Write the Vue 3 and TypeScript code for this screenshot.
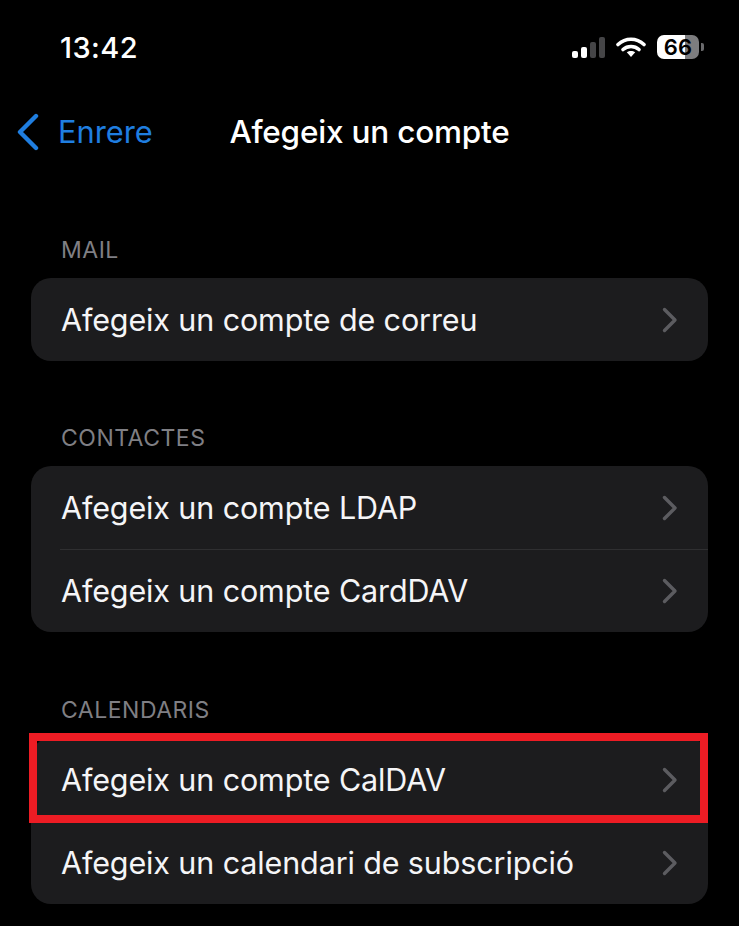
<template>
  <div class="screen">
    <div class="status">
      <span class="time">13:42</span>
      <div class="status-icons">
        <div class="signal">
          <i v-for="(h, n) in bars" :key="n" :class="{ on: n < 2 }" :style="{ height: h + 'px' }"></i>
        </div>
        <svg class="wifi" width="30" height="20" viewBox="0 0 30 20">
          <path d="M2 7.500C9.500 .5 20.500 .5 28 7.500" fill="none" stroke="#fff" stroke-width="3.600" stroke-linecap="round" />
          <path d="M7 12.500C11.500 8.500 18.500 8.500 23 12.500" fill="none" stroke="#fff" stroke-width="3.600" stroke-linecap="round" />
          <path d="M10.800 15.300C13.200 13.500 16.800 13.500 19.200 15.300L15 20Z" fill="#fff" />
        </svg>
        <div class="battery">
          <div class="battery-body"><span>66</span></div>
          <div class="battery-tip"></div>
        </div>
      </div>
    </div>

    <div class="nav">
      <div class="back">
        <svg width="26" height="38" viewBox="0 0 26 38">
          <path d="M21 3 5 19l16 16" fill="none" stroke="#1f7ee0" stroke-width="4.400" stroke-linecap="round" stroke-linejoin="round" />
        </svg>
        <span>Enrere</span>
      </div>
      <div class="title">Afegeix un compte</div>
    </div>

    <section v-for="g in groups" :key="g.label" class="group">
      <div class="group-label">{{ g.label }}</div>
      <div class="card">
        <div v-for="r in g.rows" :key="r.text" class="row">
          <span class="row-text">{{ r.text }}</span>
          <svg class="chevron" width="16" height="26" viewBox="0 0 16 26">
            <path d="M2.500 2.500 13 13 2.500 23.500" fill="none" stroke="#5c5c60" stroke-width="3.400" stroke-linecap="round" stroke-linejoin="round" />
          </svg>
          <div v-if="r.marked" class="marker"></div>
        </div>
      </div>
    </section>
  </div>
</template>

<script setup lang="ts">
interface Row {
  text: string
  marked?: boolean
}

const bars = [7, 11, 16, 21]

const groups: { label: string; rows: Row[] }[] = [
  { label: 'MAIL', rows: [{ text: 'Afegeix un compte de correu' }] },
  { label: 'CONTACTES', rows: [{ text: 'Afegeix un compte LDAP' }, { text: 'Afegeix un compte CardDAV' }] },
  {
    label: 'CALENDARIS',
    rows: [{ text: 'Afegeix un compte CalDAV', marked: true }, { text: 'Afegeix un calendari de subscripció' }],
  },
]
</script>

<style>
html, body { background: #000; }
</style>

<style scoped>
.screen { width: 739px; height: 926px; overflow: hidden; background: #000; color: #f5f5f7; font-family: Inter, "Liberation Sans", sans-serif; }
.status { height: 74px; padding: 20px 35px 0 60px; box-sizing: border-box; display: flex; justify-content: space-between; align-items: center; }
.time { font-size: 29px; font-weight: 500; color: #fff; letter-spacing: .4px; }
.status-icons { display: flex; align-items: center; gap: 11px; }
.signal { display: flex; align-items: flex-end; gap: 3px; height: 21px; }
.signal i { display: block; width: 6px; border-radius: 2px; background: #454547; }
.signal i.on { background: #fff; }
.wifi { display: block; }
.battery { display: flex; align-items: center; gap: 2px; }
.battery-body { width: 42px; height: 24px; border-radius: 7px; background: linear-gradient(90deg, #fff 0 66%, #7d7d7f 66%); display: flex; align-items: center; justify-content: center; }
.battery-body span { font-size: 22px; font-weight: 600; color: #000; letter-spacing: .2px; }
.battery-tip { width: 3px; height: 8px; border-radius: 0 2px 2px 0; background: #6a6a6c; }
.nav { height: 115px; display: grid; grid-template-columns: 1fr auto 1fr; align-items: center; }
.back { grid-column: 1; padding-left: 15px; display: flex; align-items: center; gap: 17px; color: #1f7ee0; font-size: 30.800px; }
.back svg { display: block; }
.title { grid-column: 2; font-size: 31.500px; font-weight: 550; color: #fff; letter-spacing: -.2px; }
.group { margin-top: 62px; }
.group:first-of-type { margin-top: 46px; }
.group:last-of-type { margin-top: 63px; }
.group-label { height: 30px; padding-left: 61px; font-size: 23px; line-height: 30px; color: #7f7f84; letter-spacing: .5px; }
.card { margin: 13px 31px 0; background: #1c1c1e; border-radius: 20px; }
.row { position: relative; height: 83px; display: flex; align-items: center; justify-content: space-between; padding: 0 30px 0 30px; }
.row + .row::before { content: ""; position: absolute; top: 0; left: 29px; right: 0; height: 1px; background: #2f2f31; }
.row-text { font-size: 30.500px; color: #f5f5f7; letter-spacing: -.12px; }
.chevron { display: block; }
.marker { position: absolute; z-index: 1; left: -2px; right: 0; top: -5px; bottom: -2px; border: 8px solid #ed1c24; }
</style>
